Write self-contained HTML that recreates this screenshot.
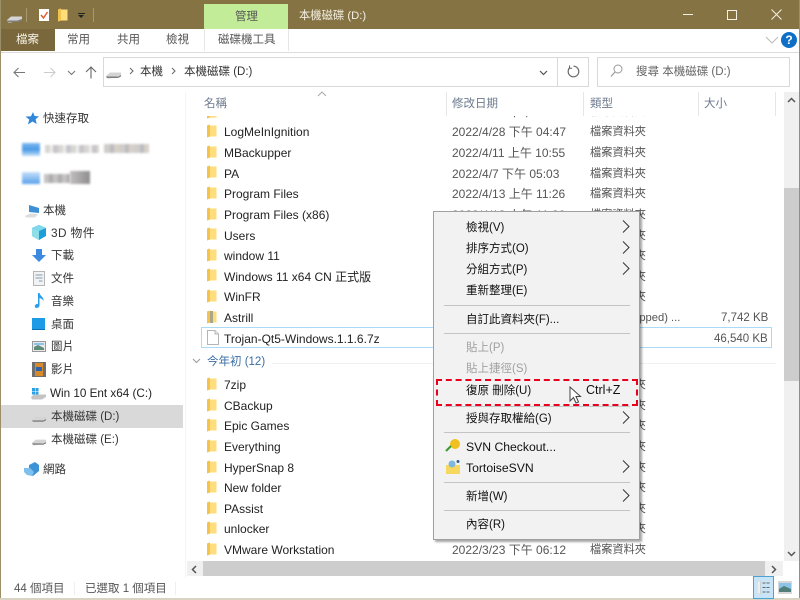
<!DOCTYPE html>
<html><head><meta charset="utf-8"><style>
html,body{margin:0;padding:0;background:#fff}
#w{position:relative;width:800px;height:600px;overflow:hidden;background:#fff;font-family:"Liberation Sans","Noto Sans CJK TC",sans-serif;font-size:12px;color:#333;filter:blur(.35px)}
#w div,#w span,#w svg{position:absolute}
.t{white-space:nowrap;line-height:16px;height:16px}
#list .t{margin-top:1px}
.n{left:224px;font-size:12px;color:#222}
.d{left:452px;color:#555;font-size:12px}
.y{left:590px;color:#555;font-size:11.2px}
.m{left:32px;color:#111;font-size:11.5px;margin-top:1px}
.g{color:#a0a0a0}
.s{left:10px;width:186px;height:1px;background:#c4c4c4}
.a{left:188px;width:8px;height:13px}
.nv{color:#333;font-size:11.5px;margin-top:1px}
.h{color:#6d7b8f;font-size:11.5px;top:96px}
.r{color:#555;font-size:11.5px;top:32px}
.b{background:#e6e6e6;width:1px;top:92px;height:24px}
.bl{filter:blur(1px)}
</style></head><body><div id="w">
<svg width="0" height="0" style="position:absolute"><defs>
<symbol id="f" viewBox="0 0 10 14"><path d="M0 1.5 L3 .5 L3 1.5 L9.5 1.5 L9.5 12.5 L3 12.5 L0 13.5Z" fill="#ffdc7c"/><path d="M0 1.5 L3 .5 V12.5 L0 13.5Z" fill="#f4c34e"/></symbol>
<symbol id="hd" viewBox="0 0 16 10"><path d="M0 7 L4 3.5 H15 L15 6 L4 9.5 H1Z" fill="#d4d4d4"/><path d="M0 7.5 H12 L15 6 V7.5 L12 9 H1Z" fill="#7f7f7f"/></symbol>
<symbol id="ar" viewBox="0 0 8 13"><path d="M1 .5 L7 6.5 L1 12.5" fill="none" stroke="#333" stroke-width="1"/></symbol>
</defs></svg>

<!-- title bar -->
<div style="left:0;top:0;width:800px;height:29px;background:#857344"></div>
<div style="left:0;top:0;width:1px;height:600px;background:#9b8f68"></div>
<div style="left:799px;top:0;width:1px;height:600px;background:#9b8f68"></div>
<div style="left:0;top:598px;width:800px;height:2px;background:#d8d4c4"></div>
<svg style="left:7px;top:13px" width="16" height="10"><use href="#hd"/></svg>
<div style="left:26px;top:8px;width:1px;height:14px;background:#a89a70"></div>
<div style="left:39px;top:9px;width:10px;height:12px;background:#fff"></div>
<svg style="left:39px;top:9px" width="10" height="12"><path d="M2 6 L4.5 9 L8.5 3" fill="none" stroke="#e0572b" stroke-width="1.4"/></svg>
<svg style="left:58px;top:8px" width="10" height="14"><use href="#f"/></svg>
<div style="left:78px;top:13px;width:7px;height:1px;background:#222"></div>
<div style="left:78px;top:15px;border-left:3.5px solid transparent;border-right:3.5px solid transparent;border-top:3px solid #222"></div>
<div style="left:93px;top:8px;width:1px;height:14px;background:#a89a70"></div>
<div style="left:204px;top:4px;width:84px;height:25px;background:#c3ec98"></div>
<div class="t" style="left:235px;top:9px;color:#555;font-size:11.5px">管理</div>
<div class="t" style="left:299px;top:8px;color:#f4f0e4;font-size:11.3px">本機磁碟 (D:)</div>
<div style="left:683px;top:14px;width:10px;height:1px;background:#f4f0e4"></div>
<div style="left:727px;top:10px;width:8px;height:8px;border:1px solid #f4f0e4"></div>
<svg style="left:771px;top:9px" width="11" height="11"><path d="M.5 .5 L10.5 10.5 M10.5 .5 L.5 10.5" stroke="#f4f0e4" stroke-width="1"/></svg>

<!-- ribbon -->
<div style="left:1px;top:29px;width:54px;height:22px;background:#7a683c"></div>
<div class="t" style="left:16px;top:32px;color:#f4f0e4;font-size:11.5px">檔案</div>
<div class="t r" style="left:67px">常用</div>
<div class="t r" style="left:117px">共用</div>
<div class="t r" style="left:166px">檢視</div>
<div style="left:204px;top:29px;width:1px;height:22px;background:#e6e6e6"></div>
<div style="left:288px;top:29px;width:1px;height:22px;background:#e6e6e6"></div>
<div class="t r" style="left:218px">磁碟機工具</div>
<div style="left:1px;top:52px;width:798px;height:1px;background:#dcdcdc"></div>
<svg style="left:765px;top:36px" width="14" height="8"><path d="M1 1 L7 7 L13 1" fill="none" stroke="#bbb"/></svg>
<div style="left:781px;top:32px;width:16px;height:16px;border-radius:8px;background:#0f6fc6;color:#fff;font-weight:bold;font-size:12px;line-height:16px;text-align:center">?</div>

<!-- nav buttons -->
<svg style="left:13px;top:67px" width="13" height="11"><path d="M12 5.5 H1 M5.5 1 L1 5.5 L5.5 10" fill="none" stroke="#777" stroke-width="1.1"/></svg>
<svg style="left:43px;top:67px" width="13" height="11"><path d="M1 5.5 H12 M7.5 1 L12 5.5 L7.5 10" fill="none" stroke="#ccc" stroke-width="1.1"/></svg>
<svg style="left:67px;top:70px" width="9" height="6"><path d="M1 1 L4.5 4.5 L8 1" fill="none" stroke="#777" stroke-width="1.1"/></svg>
<svg style="left:85px;top:66px" width="12" height="13"><path d="M6 12.5 V1 M1 6 L6 1 L11 6" fill="none" stroke="#666" stroke-width="1.1"/></svg>

<!-- address bar -->
<div style="left:103px;top:57px;width:484px;height:28px;border:1px solid #d9d9d9"></div>
<div style="left:557px;top:57px;width:1px;height:29px;background:#d9d9d9"></div>
<svg style="left:106px;top:69px" width="16" height="10"><use href="#hd"/></svg>
<svg style="left:129px;top:67px" width="5" height="8"><path d="M1 1 L4 4 L1 7" fill="none" stroke="#666"/></svg>
<div class="t" style="left:140px;top:64px;color:#333;font-size:11.5px">本機</div>
<svg style="left:171px;top:67px" width="5" height="8"><path d="M1 1 L4 4 L1 7" fill="none" stroke="#666"/></svg>
<div class="t" style="left:184px;top:64px;color:#333;font-size:11.5px">本機磁碟 (D:)</div>
<svg style="left:539px;top:70px" width="9" height="6"><path d="M1 1 L4.5 4.5 L8 1" fill="none" stroke="#555" stroke-width="1.2"/></svg>
<svg style="left:567px;top:65px" width="13" height="13"><path d="M3 2.5 A5.3 5.3 0 1 0 6.5 1.2" fill="none" stroke="#666" stroke-width="1.2"/><path d="M2.5 .5 V3.2 H5.2" fill="none" stroke="#666" stroke-width="1"/></svg>
<div style="left:597px;top:57px;width:191px;height:28px;border:1px solid #d9d9d9"></div>
<svg style="left:610px;top:64px" width="13" height="14"><circle cx="8" cy="5" r="4" fill="none" stroke="#999"/><path d="M5 8 L1 12.5" stroke="#999" stroke-width="1.2"/></svg>
<div class="t" style="left:636px;top:64px;color:#666;font-size:11.5px">搜尋 本機磁碟 (D:)</div>

<!-- column headers -->
<div style="left:185px;top:92px;width:1px;height:486px;background:#f4f4f4"></div>
<svg style="left:317px;top:91px" width="10" height="6"><path d="M1 5 L5 1 L9 5" fill="none" stroke="#aaa"/></svg>
<div class="t h" style="left:204px">名稱</div>
<div class="t h" style="left:452px">修改日期</div>
<div class="t h" style="left:590px">類型</div>
<div class="t h" style="left:704px">大小</div>
<div class="b" style="left:446px"></div>
<div class="b" style="left:583px"></div>
<div class="b" style="left:698px"></div>
<div class="b" style="left:775px"></div>

<!-- left nav -->
<svg style="left:25px;top:112px" width="14" height="13"><path d="M8 0 L9.6 4 L14 4.4 L10.6 7.2 L11.7 12 L7.5 9.5 L3 12.5 L4.2 7.5 L0.5 4.6 L6 4.2Z" fill="#2f88dc"/></svg>
<div class="t nv" style="left:43px;top:110px">快速存取</div>
<!-- blurred entries -->
<div class="bl" style="left:22px;top:143px;width:18px;height:13px;background:linear-gradient(#7db8ee,#4b9ae6 50%,#c4e0f8)"></div>
<div class="bl" style="left:45px;top:145px;width:54px;height:8px;background:repeating-linear-gradient(90deg,#d8d6d2 0 5px,#eeeeee 5px 8px,#c6c6ca 8px 13px)"></div>
<div class="bl" style="left:104px;top:144px;width:45px;height:9px;background:repeating-linear-gradient(90deg,#cfcdcb 0 6px,#bcbcc0 6px 10px,#d8d0c8 10px 15px)"></div>
<div class="bl" style="left:22px;top:172px;width:18px;height:12px;background:linear-gradient(#c4e0f8,#5aa0ec)"></div>
<div class="bl" style="left:44px;top:174px;width:26px;height:9px;background:repeating-linear-gradient(90deg,#c4c2c2 0 5px,#aeacac 5px 9px)"></div>
<div class="bl" style="left:70px;top:171px;width:20px;height:13px;background:linear-gradient(90deg,#c0bebe,#8f8d8d)"></div>

<svg style="left:24px;top:204px" width="16" height="14"><path d="M5 1 L15 4 V9 L5 8Z" fill="#3d8fd6"/><path d="M1 12 L6 9.5 L14 10 L11 13.5 H2Z" fill="#ddd"/></svg>
<div class="t nv" style="left:43px;top:202px">本機</div>
<svg style="left:32px;top:225px" width="14" height="15"><path d="M7 0 L14 3 V11 L7 15 L0 11 V3Z" fill="#1e9ed8"/><path d="M7 0 L14 3 L7 6 L0 3Z" fill="#7fd8ec"/><path d="M0 3 L7 6 V15 L0 11Z" fill="#8fdfe8"/></svg>
<div class="t nv" style="left:51px;top:224px;font-size:11.8px;letter-spacing:.4px">3D 物件</div>
<svg style="left:32px;top:249px" width="14" height="13"><path d="M4 0 H10 V6 H14 L7 13 L0 6 H4Z" fill="#3b8ae0"/></svg>
<div class="t nv" style="left:51px;top:247px">下載</div>
<svg style="left:33px;top:271px" width="12" height="15"><path d="M.5 .5 H11.5 V14.5 H.5Z" fill="#f2f2f2" stroke="#b5b5b5"/><path d="M2.5 4 H9.5 M2.5 7 H9.5 M6 10 H9.5" stroke="#7f9fb8"/></svg>
<div class="t nv" style="left:51px;top:270px">文件</div>
<svg style="left:34px;top:293px" width="11" height="16"><path d="M4 0 H5.5 C6 3 10 4 9.5 8 C8.5 6 7 5.5 5.5 5 V12.5 C5.5 15 1 16 .8 13.5 C.8 11.5 3 10.5 4 11Z" fill="#2a9ee8"/></svg>
<div class="t nv" style="left:51px;top:293px">音樂</div>
<div style="left:32px;top:318px;width:13px;height:11px;border:0;background:#1e9be6;box-shadow:0 1px 0 #0f6fae"></div>
<div class="t nv" style="left:51px;top:316px">桌面</div>
<svg style="left:32px;top:341px" width="14" height="11"><rect x=".5" y=".5" width="13" height="10" fill="#e8e8e8" stroke="#999"/><path d="M2 6 L6 4 L12 7 V9 H2Z" fill="#5e8a78"/><rect x="2" y="2" width="10" height="2" fill="#8cc4e8"/></svg>
<div class="t nv" style="left:51px;top:338px">圖片</div>
<svg style="left:32px;top:362px" width="14" height="15"><rect width="14" height="15" fill="#6e6e6e"/><rect x="3" y="1" width="8" height="13" fill="#d88a2a"/><rect x="4" y="5" width="6" height="4" fill="#2a62b0"/></svg>
<div class="t nv" style="left:51px;top:361px">影片</div>
<svg style="left:31px;top:388px" width="16" height="12"><rect x="1" y="0" width="3" height="3" fill="#2aa0e8"/><rect x="4.5" y="0" width="3" height="3" fill="#2aa0e8"/><rect x="1" y="3.5" width="3" height="3" fill="#2aa0e8"/><rect x="4.5" y="3.5" width="3" height="3" fill="#2aa0e8"/><path d="M0 9 L3 6.5 H15 V9 L11 11.5 H1Z" fill="#c4c4c4"/></svg>
<div class="t nv" style="left:50px;top:385px;font-size:11.7px;color:#222">Win 10 Ent x64 (C:)</div>
<div style="left:1px;top:405px;width:182px;height:23px;background:#d9d9d9"></div>
<svg style="left:32px;top:413px" width="15" height="10"><use href="#hd"/></svg>
<div class="t nv" style="left:51px;top:408px">本機磁碟 (D:)</div>
<svg style="left:32px;top:436px" width="15" height="10"><use href="#hd"/></svg>
<div class="t nv" style="left:51px;top:431px">本機磁碟 (E:)</div>
<svg style="left:24px;top:462px" width="15" height="15"><path d="M5 3 L11 0 L15 3 V9 L9 14 L5 12Z" fill="#3d92d8"/><path d="M0 6 L6 6 L10 10 L8 14 L3 13 L0 10Z" fill="#7fc0ee"/></svg>
<div class="t nv" style="left:43px;top:461px">網路</div>

<!-- file list -->
<div id="list" style="left:186px;top:116px;width:598px;height:445px;overflow:hidden">
<div style="left:15px;top:211px;width:569px;height:19px;border:1px solid #a9daf8"></div>
<div style="left:86px;top:247px;width:504px;height:1px;background:#f0f0f0"></div>

<svg style="left:21px;top:-11px" width="10" height="14"><use href="#f"/></svg><div class="t d" style="left:266px;top:-13px">2022/4/12 下午 05:11</div><div class="t y" style="left:404px;top:-13px">檔案資料夾</div>

<svg style="left:21px;top:8px" width="10" height="14"><use href="#f"/></svg><div class="t n" style="left:38px;top:7px">LogMeInIgnition</div><div class="t d" style="left:266px;top:7px">2022/4/28 下午 04:47</div><div class="t y" style="left:404px;top:7px">檔案資料夾</div>
<svg style="left:21px;top:29px" width="10" height="14"><use href="#f"/></svg><div class="t n" style="left:38px;top:28px">MBackupper</div><div class="t d" style="left:266px;top:28px">2022/4/11 上午 10:55</div><div class="t y" style="left:404px;top:28px">檔案資料夾</div>
<svg style="left:21px;top:49px" width="10" height="14"><use href="#f"/></svg><div class="t n" style="left:38px;top:49px">PA</div><div class="t d" style="left:266px;top:49px">2022/4/7 下午 05:03</div><div class="t y" style="left:404px;top:49px">檔案資料夾</div>
<svg style="left:21px;top:70px" width="10" height="14"><use href="#f"/></svg><div class="t n" style="left:38px;top:69px">Program Files</div><div class="t d" style="left:266px;top:69px">2022/4/13 上午 11:26</div><div class="t y" style="left:404px;top:69px">檔案資料夾</div>
<svg style="left:21px;top:91px" width="10" height="14"><use href="#f"/></svg><div class="t n" style="left:38px;top:90px">Program Files (x86)</div><div class="t d" style="left:266px;top:90px">2022/4/13 上午 11:26</div><div class="t y" style="left:404px;top:90px">檔案資料夾</div>
<svg style="left:21px;top:111px" width="10" height="14"><use href="#f"/></svg><div class="t n" style="left:38px;top:111px">Users</div><div class="t y" style="left:404px;top:111px">檔案資料夾</div>
<svg style="left:21px;top:132px" width="10" height="14"><use href="#f"/></svg><div class="t n" style="left:38px;top:131px">window 11</div><div class="t y" style="left:404px;top:131px">檔案資料夾</div>
<svg style="left:21px;top:152px" width="10" height="14"><use href="#f"/></svg><div class="t n" style="left:38px;top:152px">Windows 11 x64 CN 正式版</div><div class="t y" style="left:404px;top:152px">檔案資料夾</div>
<svg style="left:21px;top:173px" width="10" height="14"><use href="#f"/></svg><div class="t n" style="left:38px;top:172px">WinFR</div><div class="t y" style="left:404px;top:172px">檔案資料夾</div>
<svg style="left:21px;top:194px" width="10" height="14"><use href="#f"/></svg><div style="left:24px;top:195px;width:3px;height:12px;background:#a9a68c"></div><div class="t n" style="left:38px;top:193px">Astrill</div><div class="t y" style="left:375px;top:193px">Compressed (zipped) ...</div><div class="t y" style="left:535px;top:193px;font-size:11.5px">7,742 KB</div>
<svg style="left:21px;top:214px" width="12" height="15"><path d="M.5 .5 H8 L11.5 4 V14.5 H.5Z" fill="#fff" stroke="#b4b4b4"/><path d="M8 .5 V4 H11.5" fill="#eee" stroke="#b4b4b4"/></svg><div class="t n" style="left:38px;top:214px">Trojan-Qt5-Windows.1.1.6.7z</div><div class="t y" style="left:528px;top:214px;font-size:11.5px">46,540 KB</div>

<svg style="left:6px;top:242px" width="9" height="6"><path d="M1 1 L4.5 4.5 L8 1" fill="none" stroke="#999"/></svg>
<div class="t" style="left:21px;top:237px;color:#3a6ea5;font-size:11.5px">今年初 (12)</div>

<svg style="left:21px;top:261px" width="10" height="14"><use href="#f"/></svg><div class="t n" style="left:38px;top:260px">7zip</div><div class="t y" style="left:404px;top:260px">檔案資料夾</div>
<svg style="left:21px;top:282px" width="10" height="14"><use href="#f"/></svg><div class="t n" style="left:38px;top:281px">CBackup</div><div class="t y" style="left:404px;top:281px">檔案資料夾</div>
<svg style="left:21px;top:302px" width="10" height="14"><use href="#f"/></svg><div class="t n" style="left:38px;top:301px">Epic Games</div><div class="t y" style="left:404px;top:301px">檔案資料夾</div>
<svg style="left:21px;top:323px" width="10" height="14"><use href="#f"/></svg><div class="t n" style="left:38px;top:322px">Everything</div><div class="t y" style="left:404px;top:322px">檔案資料夾</div>
<svg style="left:21px;top:344px" width="10" height="14"><use href="#f"/></svg><div class="t n" style="left:38px;top:343px">HyperSnap 8</div><div class="t y" style="left:404px;top:343px">檔案資料夾</div>
<svg style="left:21px;top:364px" width="10" height="14"><use href="#f"/></svg><div class="t n" style="left:38px;top:363px">New folder</div><div class="t y" style="left:404px;top:363px">檔案資料夾</div>
<svg style="left:21px;top:385px" width="10" height="14"><use href="#f"/></svg><div class="t n" style="left:38px;top:384px">PAssist</div><div class="t y" style="left:404px;top:384px">檔案資料夾</div>
<svg style="left:21px;top:405px" width="10" height="14"><use href="#f"/></svg><div class="t n" style="left:38px;top:404px">unlocker</div><div class="t y" style="left:404px;top:404px">檔案資料夾</div>
<svg style="left:21px;top:426px" width="10" height="14"><use href="#f"/></svg><div class="t n" style="left:38px;top:425px">VMware Workstation</div><div class="t d" style="left:266px;top:425px">2022/3/23 下午 06:12</div><div class="t y" style="left:404px;top:425px">檔案資料夾</div>
</div>

<!-- scrollbars -->
<div style="left:784px;top:92px;width:15px;height:469px;background:#f0f0f0"></div>
<div style="left:784px;top:188px;width:15px;height:193px;background:#cdcdcd"></div>
<svg style="left:787px;top:97px" width="9" height="6"><path d="M1 5 L4.5 1.5 L8 5" fill="none" stroke="#555" stroke-width="1.5"/></svg>
<svg style="left:787px;top:551px" width="9" height="6"><path d="M1 1 L4.5 4.5 L8 1" fill="none" stroke="#555" stroke-width="1.5"/></svg>
<div style="left:187px;top:561px;width:596px;height:15px;background:#f0f0f0"></div>
<div style="left:203px;top:561px;width:562px;height:15px;background:#cdcdcd"></div>
<svg style="left:191px;top:565px" width="6" height="9"><path d="M5 1 L1.5 4.5 L5 8" fill="none" stroke="#555" stroke-width="1.5"/></svg>
<svg style="left:771px;top:565px" width="6" height="9"><path d="M1 1 L4.5 4.5 L1 8" fill="none" stroke="#555" stroke-width="1.5"/></svg>

<!-- status bar -->
<div class="t" style="left:14px;top:581px;color:#555;font-size:11.5px">44 個項目</div>
<div style="left:74px;top:582px;width:1px;height:13px;background:#eee"></div>
<div class="t" style="left:85px;top:581px;color:#555;font-size:11.5px">已選取 1 個項目</div>
<div style="left:175px;top:582px;width:1px;height:13px;background:#eee"></div>
<div style="left:753px;top:576px;width:19px;height:21px;background:#c8e4f6;border:1px solid #4ba3d4"></div>
<svg style="left:757px;top:581px" width="14" height="13"><rect x="0" y="0" width="3.5" height="13" fill="#eee" stroke="#bbb" stroke-width=".5"/><path d="M5.5 2 H13 M5.5 6.5 H13 M5.5 11 H13" stroke="#666" stroke-dasharray="3 1"/></svg>
<div style="left:778px;top:581px;width:14px;height:13px;background:#d8d8d8"></div>
<svg style="left:779px;top:583px" width="12" height="9"><rect width="12" height="9" fill="#8cc4e8"/><path d="M0 6 L5 3 L12 6 V9 H0Z" fill="#4f7f78"/></svg>

<!-- context menu -->
<div id="cm" style="left:433px;top:211px;width:205px;height:327px;background:#f2f2f2;border:1px solid #a0a0a0;box-shadow:2px 2px 2px rgba(0,0,0,.35)">
<div class="t m" style="top:7px">檢視(V)</div><svg class="a" style="top:8px" width="8" height="13"><use href="#ar"/></svg>
<div class="t m" style="top:28px">排序方式(O)</div><svg class="a" style="top:29px" width="8" height="13"><use href="#ar"/></svg>
<div class="t m" style="top:49px">分組方式(P)</div><svg class="a" style="top:50px" width="8" height="13"><use href="#ar"/></svg>
<div class="t m" style="top:70px">重新整理(E)</div>
<div class="s" style="top:93px"></div>
<div class="t m" style="top:99px">自訂此資料夾(F)...</div>
<div class="s" style="top:121px"></div>
<div class="t m g" style="top:127px">貼上(P)</div>
<div class="t m g" style="top:148px">貼上捷徑(S)</div>
<div class="t m" style="top:170px">復原 刪除(U)</div>
<div class="t m" style="left:152px;top:169px;font-size:12.5px">Ctrl+Z</div>
<div class="s" style="top:194px"></div>
<div class="t m" style="top:198px">授與存取權給(G)</div><svg class="a" style="top:199px" width="8" height="13"><use href="#ar"/></svg>
<div class="s" style="top:220px"></div>
<svg style="left:11px;top:226px" width="16" height="16"><circle cx="10" cy="6" r="5" fill="#f0c020"/><path d="M1 13 L6 8" stroke="#3a9a30" stroke-width="2"/></svg>
<div class="t m" style="top:226px;font-size:12.2px">SVN Checkout...</div>
<svg style="left:11px;top:247px" width="16" height="16"><path d="M1 6 H15 V15 H1Z" fill="#f6d860"/><circle cx="7" cy="5" r="3.5" fill="#7fb8dc"/><circle cx="13" cy="2.5" r="1.5" fill="#335f9a"/></svg>
<div class="t m" style="top:247px;font-size:12.2px">TortoiseSVN</div><svg class="a" style="top:248px" width="8" height="13"><use href="#ar"/></svg>
<div class="s" style="top:270px"></div>
<div class="t m" style="top:276px">新增(W)</div><svg class="a" style="top:277px" width="8" height="13"><use href="#ar"/></svg>
<div class="s" style="top:298px"></div>
<div class="t m" style="top:304px">內容(R)</div>
</div>

<!-- red dashed highlight -->
<div style="left:436px;top:379px;width:198px;height:23px;border:2px dashed #e8001c"></div>
<svg style="left:569px;top:386px" width="13" height="20"><path d="M1 1 V15 L4.5 11.5 L7 17 L9.5 16 L7 10.5 H11.5Z" fill="#fff" stroke="#444" stroke-width="1"/></svg>
</div></body></html>
